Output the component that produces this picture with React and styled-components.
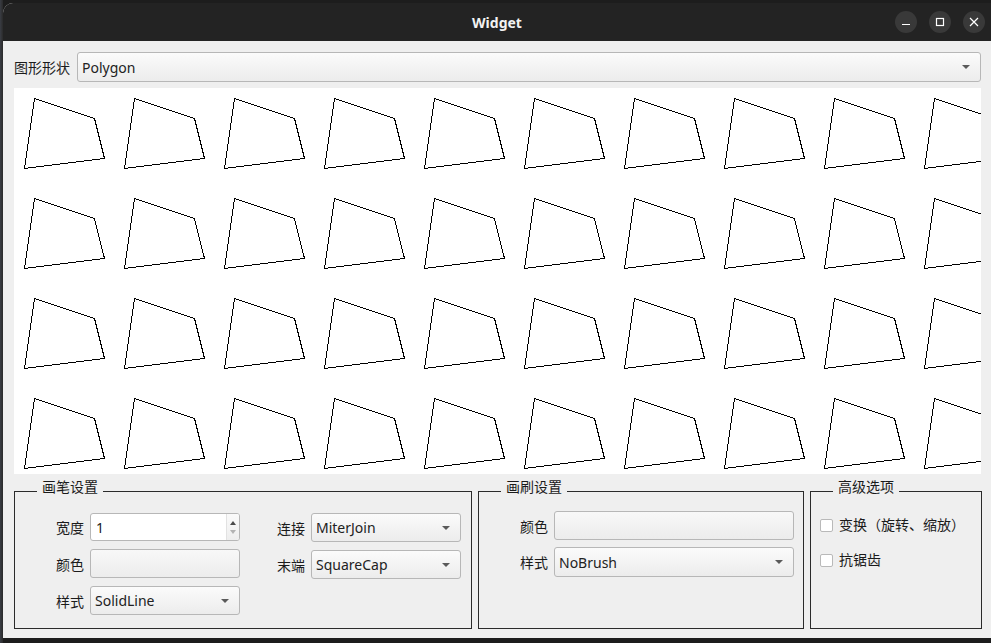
import React from 'react';
import styled, { createGlobalStyle } from 'styled-components';

const GlobalStyle = createGlobalStyle`
  html, body {
    margin: 0;
    padding: 0;
    background: #1d1d1d;
    width: 991px;
    height: 643px;
    overflow: hidden;
  }
  body {
    font-family: "Noto Sans", "Noto Sans CJK SC", sans-serif;
    font-size: 14px;
    color: #1b1b1b;
  }
`;

const Desktop = styled.div`
  display: flex;
  width: 991px;
  height: 643px;
  padding: 3px 0 5px 3px;
  box-sizing: border-box;
  background: linear-gradient(90deg, #3a3d44 0, #2a2a2a 3px, #1d1d1d 3px);
`;

const Window = styled.div`
  flex: 1;
  display: flex;
  flex-direction: column;
  border-radius: 10px 0 0 0;
  overflow: hidden;
  background: #efefef;
`;

const TitleBar = styled.div`
  height: 38px;
  flex: none;
  background: #232323;
  display: flex;
  align-items: center;
  justify-content: center;
  position: relative;
  color: #f2f2f2;
  font-weight: bold;
  font-size: 14px;
`;

const TitleButtons = styled.div`
  position: absolute;
  right: 6px;
  top: 8px;
  display: flex;
  gap: 12px;
`;

const TitleButton = styled.div`
  width: 22px;
  height: 22px;
  border-radius: 50%;
  background: #393939;
  display: flex;
  align-items: center;
  justify-content: center;
`;

const Content = styled.div`
  flex: 1;
  display: flex;
  flex-direction: column;
  padding: 11px 10px 9px 11px;
`;

const ShapeRow = styled.div`
  display: flex;
  align-items: center;
  gap: 7px;
  height: 30px;
`;

const Label = styled.span`
  white-space: nowrap;
  text-align: ${({ align }) => align || 'left'};
`;

const Combo = styled.div`
  flex: ${({ grow }) => (grow ? 1 : 'none')};
  height: ${({ h }) => h || 29}px;
  box-sizing: border-box;
  border: 1px solid #b7b7b7;
  border-radius: 3px;
  background: linear-gradient(#fbfbfb, #ececec);
  display: flex;
  align-items: center;
  justify-content: space-between;
  padding: 0 10px 0 4px;
  color: #222;
`;

const Arrow = styled.span`
  width: 0;
  height: 0;
  border-left: 4px solid transparent;
  border-right: 4px solid transparent;
  border-top: 4px solid #5a5a5a;
`;

const Canvas = styled.div`
  margin-top: 6px;
  height: 386px;
  background: #ffffff;
  overflow: hidden;
`;

const GroupRow = styled.div`
  display: flex;
  gap: 6px;
  margin-top: 3px;
  flex: 1;
`;

const Group = styled.fieldset`
  margin: 0;
  padding: 0;
  width: ${({ w }) => w}px;
  box-sizing: border-box;
  border: 1px solid #2b2b2b;
  min-width: 0;
  flex: none;
`;

const Legend = styled.legend`
  margin-left: 22px;
  padding: 0 5px 8px;
  line-height: 20px;
  color: #1b1b1b;
`;

const GroupBody = styled.div`
  padding: ${({ pad }) => pad};
`;

const Forms = styled.div`
  display: flex;
  align-items: flex-start;
  gap: 37px;
`;

const Form = styled.div`
  display: grid;
  grid-template-columns: 28px ${({ fw }) => fw}px;
  column-gap: 6px;
  row-gap: ${({ rg }) => rg || 8}px;
  align-items: center;
`;

const SpinBox = styled.div`
  height: 28px;
  box-sizing: border-box;
  border: 1px solid #b7b7b7;
  border-radius: 3px;
  background: #fff;
  display: flex;
  align-items: stretch;
`;

const SpinText = styled.span`
  flex: 1;
  display: flex;
  align-items: center;
  padding-left: 5px;
`;

const SpinButtons = styled.div`
  width: 12px;
  display: flex;
  flex-direction: column;
  align-items: center;
  justify-content: center;
  gap: 5px;
  border-left: 1px solid #e2e2e2;
  background: linear-gradient(#fafafa, #eeeeee);
  border-radius: 0 2px 2px 0;
`;

const SpinArrow = styled.span`
  width: 0;
  height: 0;
  border-left: 3px solid transparent;
  border-right: 3px solid transparent;
  ${({ up }) =>
    up ? 'border-bottom: 4px solid #4a4a4a;' : 'border-top: 4px solid #b3b3b3;'}
`;

const ColorButton = styled.div`
  height: 29px;
  box-sizing: border-box;
  border: 1px solid #b7b7b7;
  border-radius: 3px;
  background: linear-gradient(#f8f8f8, #ececec);
`;

const CheckList = styled.div`
  display: flex;
  flex-direction: column;
  gap: 15px;
`;

const CheckRow = styled.label`
  display: flex;
  align-items: center;
  gap: 6px;
  line-height: 20px;
`;

const CheckBox = styled.span`
  width: 13px;
  height: 13px;
  box-sizing: border-box;
  border: 1px solid #b9b9b9;
  border-radius: 2px;
  background: #fff;
`;

const PolyCanvas = () => {
  const cells = [];
  for (let y = 0; y < 386; y += 100) {
    for (let x = 0; x < 967; x += 100) {
      cells.push([x, y]);
    }
  }
  const pts = [[10, 80], [20, 10], [80, 30], [90, 70]];
  return (
    <svg width="967" height="386" shapeRendering="crispEdges">
      {cells.map(([x, y]) => (
        <polygon
          key={`${x}-${y}`}
          points={pts.map(([px, py]) => `${x + px + 0.5},${y + py + 0.5}`).join(' ')}
          fill="none"
          stroke="#000"
          strokeWidth="1"
        />
      ))}
    </svg>
  );
};

export default function App() {
  return (
    <>
      <GlobalStyle />
      <Desktop>
        <Window>
          <TitleBar>
            Widget
            <TitleButtons>
              <TitleButton>
                <svg width="10" height="10" viewBox="0 0 10 10">
                  <path d="M1 7.5h8" stroke="#fff" strokeWidth="1.2" />
                </svg>
              </TitleButton>
              <TitleButton>
                <svg width="10" height="10" viewBox="0 0 10 10">
                  <rect x="1.5" y="1.5" width="7" height="7" fill="none" stroke="#fff" strokeWidth="1.2" />
                </svg>
              </TitleButton>
              <TitleButton>
                <svg width="10" height="10" viewBox="0 0 10 10">
                  <path d="M1 1l8 8M9 1l-8 8" stroke="#fff" strokeWidth="1.2" />
                </svg>
              </TitleButton>
            </TitleButtons>
          </TitleBar>
          <Content>
            <ShapeRow>
              <Label>图形形状</Label>
              <Combo grow h={30}>
                Polygon
                <Arrow />
              </Combo>
            </ShapeRow>
            <Canvas>
              <PolyCanvas />
            </Canvas>
            <GroupRow>
              <Group w={458}>
                <Legend>画笔设置</Legend>
                <GroupBody pad="8px 0 0 41px">
                  <Forms>
                    <Form fw={150}>
                      <Label align="right">宽度</Label>
                      <SpinBox>
                        <SpinText>1</SpinText>
                        <SpinButtons>
                          <SpinArrow up />
                          <SpinArrow />
                        </SpinButtons>
                      </SpinBox>
                      <Label align="right">颜色</Label>
                      <ColorButton />
                      <Label align="right">样式</Label>
                      <Combo>
                        SolidLine
                        <Arrow />
                      </Combo>
                    </Form>
                    <Form fw={150}>
                      <Label align="right">连接</Label>
                      <Combo>
                        MiterJoin
                        <Arrow />
                      </Combo>
                      <Label align="right">末端</Label>
                      <Combo>
                        SquareCap
                        <Arrow />
                      </Combo>
                    </Form>
                  </Forms>
                </GroupBody>
              </Group>
              <Group w={326}>
                <Legend>画刷设置</Legend>
                <GroupBody pad="6px 0 0 41px">
                  <Form fw={240} rg={7}>
                    <Label align="right">颜色</Label>
                    <ColorButton />
                    <Label align="right">样式</Label>
                    <Combo h={30}>
                      NoBrush
                      <Arrow />
                    </Combo>
                  </Form>
                </GroupBody>
              </Group>
              <Group w={172}>
                <Legend>高级选项</Legend>
                <GroupBody pad="10px 0 0 9px">
                  <CheckList>
                    <CheckRow>
                      <CheckBox />
                      变换（旋转、缩放）
                    </CheckRow>
                    <CheckRow>
                      <CheckBox />
                      抗锯齿
                    </CheckRow>
                  </CheckList>
                </GroupBody>
              </Group>
            </GroupRow>
          </Content>
        </Window>
      </Desktop>
    </>
  );
}
